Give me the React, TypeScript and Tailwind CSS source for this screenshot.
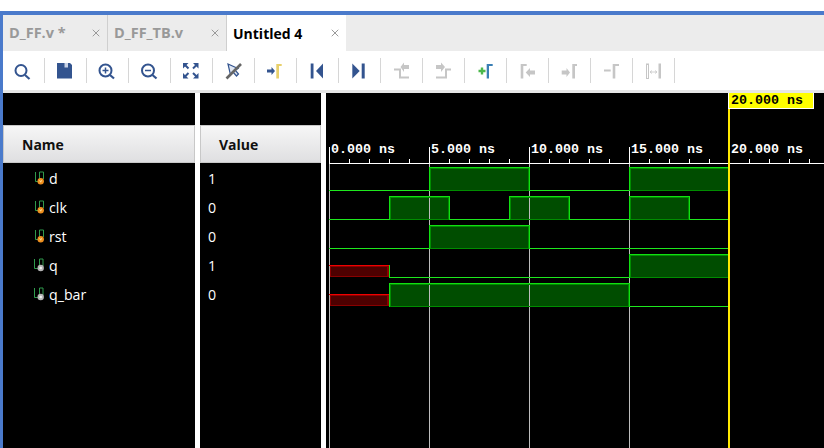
import React from "react";
import { X } from "lucide-react";

const INK = "#33548f";
const OFF = "#c6c6c6";

const tabs = [
  { label: "D_FF.v *", width: "w-[105px]", active: false },
  { label: "D_FF_TB.v", width: "w-[119px]", active: false },
  { label: "Untitled 4", width: "w-[119px]", active: true },
];

const signals = [
  { name: "d", value: "1", kind: "in" },
  { name: "clk", value: "0", kind: "in" },
  { name: "rst", value: "0", kind: "in" },
  { name: "q", value: "1", kind: "out" },
  { name: "q_bar", value: "0", kind: "out" },
];

const Arm = ({ d }: { d: string }) => <path d={d} fill="none" stroke={INK} strokeWidth="2.2" />;

const toolIcons: React.ReactNode[] = [
  <><circle cx="10" cy="11.5" r="5.5" fill="none" stroke={INK} strokeWidth="2" /><Arm d="M14 16l4.5 4" /></>,
  <><path d="M4 4h13l2 2v13.5H4z" fill={INK} /><rect x="11.5" y="4" width="3.5" height="4.5" fill="#c9d3e6" /></>,
  <><circle cx="10.5" cy="11.5" r="6" fill="none" stroke={INK} strokeWidth="2" /><path d="M7.5 11.5h6M10.5 8.5v6" stroke={INK} strokeWidth="1.5" /><Arm d="M15 16l4 3.5" /></>,
  <><circle cx="11" cy="11.5" r="6" fill="none" stroke={INK} strokeWidth="2" /><path d="M8 11.5h6" stroke={INK} strokeWidth="1.5" /><Arm d="M15.5 16l4 3.5" /></>,
  <>
    <path d="M4 4h5.5L4 9.5zM19.5 4H14l5.5 5.5zM4 19.5h5.5L4 14zM19.5 19.5H14l5.5-5.5z" fill={INK} />
    <path d="M6 6l3.500 3.500M17.500 6L14 9.500M6 17.500L9.500 14M17.500 17.500L14 14" stroke={INK} strokeWidth="2" />
  </>,
  <>
    <path d="M7 5l2.500 11 2.500-3 3.500 4 2-2-3.500-4 3-1.500z" fill="#dfe6f2" stroke={INK} strokeWidth="1.2" />
    <path d="M5.500 19.500L20 5" stroke="#666666" strokeWidth="2.600" />
  </>,
  <>
    <path d="M4 10.500h4.500V8l3.500 4-3.500 4v-2.500H4z" fill={INK} />
    <path d="M13.300 5h5.400v2H16v12.500h-2.700z" fill="#e8d06c" />
  </>,
  <><rect x="5.700" y="4.500" width="2.800" height="15" fill={INK} /><path d="M18 4.500L11 12l7 7.500z" fill={INK} /></>,
  <><path d="M5.300 4.500L12.700 12l-7.400 7.500z" fill={INK} /><rect x="14.700" y="4.500" width="3" height="15" fill={INK} /></>,
  <>
    <path d="M5 10.500h6v8h9" fill="none" stroke={OFF} strokeWidth="2" />
    <path d="M20 6v4h-5v3l-3.500-5L15 3.500V6z" fill={OFF} />
  </>,
  <>
    <path d="M5 18.500h10v-8h5" fill="none" stroke={OFF} strokeWidth="2" />
    <path d="M5 6v4h5v3l4-5-4-4.500V6z" fill={OFF} />
  </>,
  <>
    <path d="M9 8.500v7M5.500 12h7" stroke="#4cb84c" strokeWidth="2.400" />
    <path d="M13.700 5h6v2H16v12.500h-2.300z" fill="#3a7fb5" />
  </>,
  <>
    <path d="M5.700 5h6v2H8.300v12.500H5.700z" fill={OFF} />
    <path d="M20 11.500v4h-5V18l-4.300-4.500L15 9v2.500z" fill={OFF} />
  </>,
  <>
    <path d="M4.700 11.500h4.800V9l3.500 4.500L9.500 18v-2.500H4.700z" fill={OFF} />
    <path d="M15.300 5H20v2h-2v12.500h-2.700z" fill={OFF} />
  </>,
  <>
    <rect x="5" y="10.500" width="6.700" height="2" fill={OFF} />
    <path d="M13.700 5H20v2h-3.700v12.500h-2.600z" fill={OFF} />
  </>,
  <>
    <rect x="5.500" y="5" width="2" height="14.500" fill="none" stroke={OFF} />
    <rect x="17.500" y="4.500" width="2.500" height="15" fill={OFF} />
    <path d="M9 13h7M9 13l2-1.500M9 13l2 1.500M16 13l-2-1.500M16 13l-2 1.500" fill="none" stroke={OFF} strokeWidth="0.800" />
  </>,
];

const NetIcon = ({ kind }: { kind: string }) => {
  const input = kind === "in";
  return (
    <svg width="16" height="16" viewBox="0 0 16 16" className="shrink-0">
      <path
        d={input ? "M2.500 1v9.500h4V1h4v7" : "M1.500 1v9.500h5V1h3.500v7"}
        fill="none"
        stroke="#2f9a4c"
        strokeWidth="1"
      />
      {input ? (
        <>
          <circle cx="7.700" cy="10.200" r="3.200" fill="#ee8f1e" />
          <path d="M6.700 9.200l1 2 1-2" fill="none" stroke="#ffe9b0" strokeWidth="0.800" />
        </>
      ) : (
        <>
          <circle cx="7.700" cy="10" r="3.200" fill="#b5b5b5" />
          <circle cx="7.700" cy="10" r="1.300" fill="#f2f2f2" />
        </>
      )}
    </svg>
  );
};

const majors = [329, 429, 529, 629];
const labels = ["0.000 ns", "5.000 ns", "10.000 ns", "15.000 ns", "20.000 ns"];
const minors = Array.from({ length: 25 }, (_, i) => 329 + i * 20).filter((x) => (x - 329) % 100 !== 0);

type Trace = { low: number; high: number; spans: number[][]; redTop?: number };

const traces: Trace[] = [
  { low: 190, high: 167, spans: [[429, 529], [629, 729]] },
  { low: 219, high: 196, spans: [[389, 449], [509, 569], [629, 689]] },
  { low: 248, high: 225, spans: [[429, 529]] },
  { low: 277, high: 254, spans: [[629, 729]], redTop: 265 },
  { low: 306, high: 283, spans: [[389, 629]], redTop: 294 },
];

const RED_END = 389;
const BRIGHT = "#12e012";
const DIM = "#008c00";

const BlockFill = ({ x0, x1, top, low, fill }: { x0: number; x1: number; top: number; low: number; fill: string }) => (
  <rect x={x0} y={top} width={x1 - x0 + 1} height={low - top + 1} fill={fill} />
);

const BlockEdge = ({ x0, x1, top, low }: { x0: number; x1: number; top: number; low: number }) => {
  const h = low - top + 1;
  return (
    <g>
      <rect x={x0 + 1} y={top + 1} width={x1 - x0 - 1} height={1} fill={DIM} />
      <rect x={x0 + 1} y={top + 1} width={1} height={h - 1} fill={DIM} />
      <rect x={x1 - 1} y={top + 1} width={1} height={h - 1} fill={DIM} />
      <rect x={x0} y={low} width={x1 - x0} height={1} fill={DIM} />
      <rect x={x0} y={top} width={x1 - x0 + 1} height={1} fill={BRIGHT} />
      <rect x={x0} y={top} width={1} height={h} fill={BRIGHT} />
      <rect x={x1} y={top} width={1} height={h} fill={BRIGHT} />
    </g>
  );
};

const RedBlock = ({ top, low }: { top: number; low: number }) => (
  <g>
    <rect x={330} y={top} width={RED_END - 330} height={low - top} fill="#8a0000" />
    <rect x={331} y={top + 2} width={RED_END - 333} height={low - top - 3} fill="#4d0000" />
    <rect x={329} y={top} width={RED_END - 329} height={1} fill="#f00000" />
  </g>
);

const Waveform = () => (
  <svg width="498" height="355" viewBox="326 93 498 355" shapeRendering="crispEdges" className="block">
    {traces.map((t) =>
      t.spans.map(([a, b]) => <BlockFill key={`${t.low}-${a}`} x0={a} x1={b} top={t.high} low={t.low} fill="#004d00" />)
    )}
    {majors.map((x) => (
      <rect key={x} x={x} y={163} width={1} height={285} fill="#bdbdbd" />
    ))}
    {majors.map((x) => (
      <rect key={x} x={x} y={147} width={1} height={16} fill="#ffffff" />
    ))}
    {minors.map((x) => (
      <rect key={x} x={x} y={159} width={1} height={4} fill="#ffffff" />
    ))}
    <rect x={329} y={163} width={495} height={1} fill="#ffffff" />
    {labels.map((t, i) => (
      <text
        key={t}
        x={331 + i * 100}
        y={153}
        fill="#ffffff"
        fontFamily="'Liberation Mono', monospace"
        fontWeight="700"
        fontSize="13.33"
      >
        {t}
      </text>
    ))}
    {traces.map((t) => {
      const start = t.redTop ? RED_END : 329;
      return (
        <g key={t.low}>
          <rect x={start} y={t.low} width={729 - start} height={1} fill="#1ee81e" />
          {t.redTop && <RedBlock top={t.redTop} low={t.low} />}
          {t.redTop === 265 && <rect x={RED_END} y={265} width={1} height={12} fill={BRIGHT} />}
          {t.spans.map(([a, b]) => (
            <BlockEdge key={a} x0={a} x1={b} top={t.high} low={t.low} />
          ))}
        </g>
      );
    })}
    <rect x={728} y={109} width={2} height={339} fill="#ffe900" />
  </svg>
);

const HeaderCell = ({ label, pad }: { label: string; pad: string }) => (
  <div
    className={`h-[38px] flex items-center ${pad} bg-gradient-to-b from-[#f6f6f6] to-[#dfdfe1] border border-[#c8c8c8] text-[14px] font-bold text-[#101010]`}
  >
    {label}
  </div>
);

export default function App() {
  return (
    <div className="w-[824px] h-[448px] overflow-hidden bg-white flex flex-col font-['Open_Sans',sans-serif]">
      <div className="h-[11px] shrink-0" />
      <div className="flex-1 min-h-0 flex flex-col border-t-4 border-l-[3px] border-[#4a7acb]">
        {/* Tabs */}
        <div className="h-[36px] shrink-0 flex bg-[#ececec]">
          {tabs.map((tab) => (
            <div
              key={tab.label}
              className={`${tab.width} flex items-center justify-between pl-[6px] pr-[5px] ${
                tab.active
                  ? "bg-white text-black text-[14px] font-bold"
                  : "text-[#999999] text-[14.5px] font-bold border-r border-[#cfcfcf]"
              }`}
            >
              <span>{tab.label}</span>
              <X size={12} strokeWidth={2} className="text-[#9a9a9a]" />
            </div>
          ))}
        </div>

        {/* Toolbar */}
        <div className="h-[39px] shrink-0 flex items-center bg-white">
          {toolIcons.map((icon, i) => (
            <div key={i} className="w-[42px] h-[25px] flex items-center justify-center border-r border-[#d6d6d6] pr-px">
              <svg width="24" height="24" viewBox="0 0 24 24">
                {icon}
              </svg>
            </div>
          ))}
        </div>
        <div className="h-[3px] shrink-0 bg-[#e6e6e6]" />

        {/* Panels */}
        <div className="flex-1 min-h-0 flex gap-[5px]">
          <div className="w-[192px] bg-black pt-[32px]">
            <HeaderCell label="Name" pad="pl-[18px]" />
            <div className="pt-px">
              {signals.map((s) => (
                <div key={s.name} className="h-[29px] flex items-center pl-[30px] text-[14.2px] text-white">
                  <NetIcon kind={s.kind} />
                  <span>{s.name}</span>
                </div>
              ))}
            </div>
          </div>
          <div className="w-[121px] bg-black pt-[32px]">
            <HeaderCell label="Value" pad="pl-[18px]" />
            <div className="pt-px">
              {signals.map((s) => (
                <div key={s.name} className="h-[29px] flex items-center pl-[8px] text-[14.2px] text-white">
                  {s.value}
                </div>
              ))}
            </div>
          </div>
          <div className="w-[498px] bg-black relative">
            <Waveform />
            {/* Cursor label */}
            <div className="absolute left-[402px] top-0 w-[86px] h-[16px] bg-[#ffff00] border border-t-0 border-white text-black text-[13.33px] font-bold leading-[16px] pl-[2px] font-['Liberation_Mono',monospace] whitespace-pre">
              20.000 ns
            </div>
          </div>
        </div>
      </div>
    </div>
  );
}
